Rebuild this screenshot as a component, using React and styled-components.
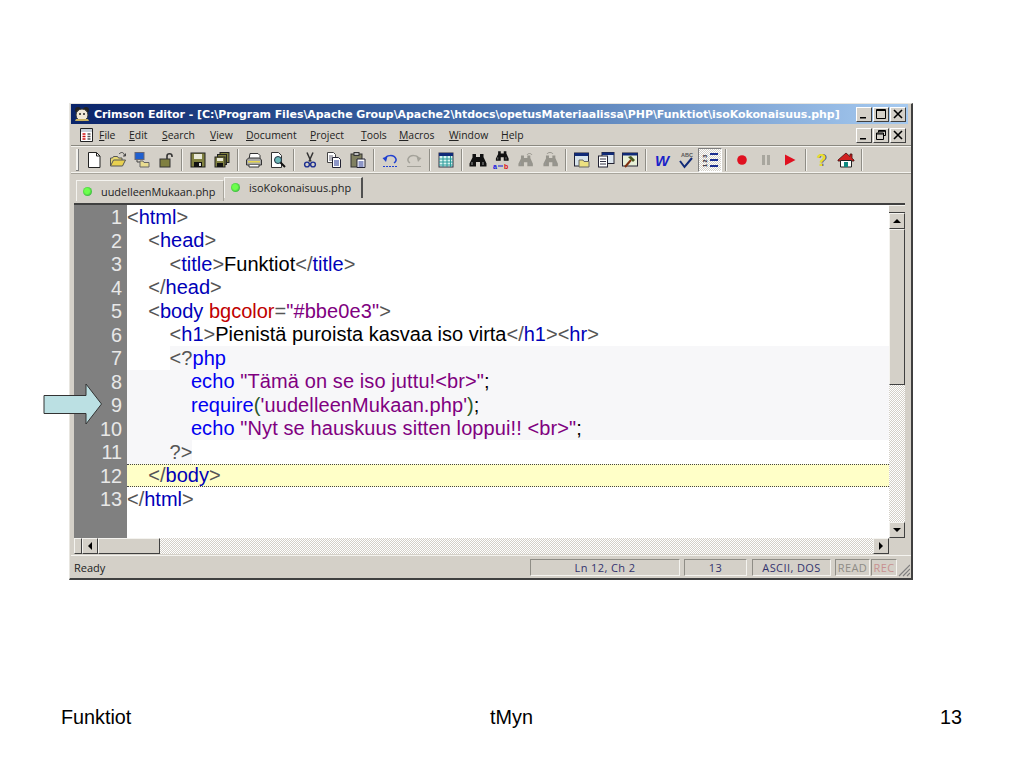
import React from "react";
import styled, { createGlobalStyle } from "styled-components";

const Global = createGlobalStyle`
  html, body { margin: 0; padding: 0; background: #fff; }
  body { font-family: "Liberation Sans", Arial, sans-serif; }
`;

const Slide = styled.div`
  position: relative;
  width: 1024px;
  height: 768px;
  overflow: hidden;
  padding: 103px 0 0 69px;
  box-sizing: border-box;
`;
const Win = styled.div`
  width: 844px;
  height: 477px;
  box-sizing: border-box;
  display: flex;
  flex-direction: column;
  background: #d4d0c8;
  border-right: 2px solid #404040;
  border-bottom: 2px solid #404040;
  border-left: 1px solid #e8e6e0;
  border-top: 1px solid #e8e6e0;
  padding-left: 1px;
`;
const TitleBar = styled.div`
  height: 20px;
  flex: none;
  display: flex;
  align-items: center;
  padding-right: 2px;
  margin-right: 3px;
  background: linear-gradient(90deg, #0a246a 0%, #3f69a8 45%, #a6caf0 100%);
  color: #fff;
  font: bold 11px "DejaVu Sans", sans-serif;
  letter-spacing: -0.07px;
  white-space: nowrap;
`;
const TitleIcon = styled.svg`
  width: 18px;
  height: 16px;
  margin: 0 3px 0 2px;
  flex: none;
`;
const TitleText = styled.span`
  flex: 1;
  overflow: hidden;
`;
const CaptionGroup = styled.div`
  display: flex;
  gap: ${p => p.$gap}px;
  flex: none;
  padding-right: ${p => p.$pad}px;
`;
const CaptionBtn = styled.div`
  width: 16px;
  height: 15px;
  box-sizing: border-box;
  background: #d4d0c8;
  border: 1px solid;
  border-color: #fff #404040 #404040 #fff;
  display: flex;
  align-items: center;
  justify-content: center;
  svg { width: 10px; height: 10px; display: block; }
`;
const MenuBar = styled.div`
  height: 22px;
  flex: none;
  display: flex;
  align-items: center;
  font: 10.4px "Open Sans", sans-serif;
  color: #222;
  padding-left: 8px;
`;
const MenuIcon = styled.svg`
  width: 15px;
  height: 16px;
  flex: none;
  margin-right: 5px;
`;
const MenuItems = styled.div`
  display: flex;
  flex: 1;
`;
const MenuItem = styled.span`
  width: ${p => p.$w}px;
  u { text-decoration: underline; }
`;
const Toolbar = styled.div`
  height: 27px;
  flex: none;
  box-sizing: border-box;
  display: flex;
  align-items: center;
  border-top: 1px solid #f4f3ef;
  border-bottom: 1px solid #f4f3ef;
  box-shadow: 0 -1px 0 #8a8880, 0 1px 0 #a8a59c;
  padding-left: 5px;
`;
const Grip = styled.div`
  width: 2px;
  height: 21px;
  flex: none;
  margin-right: 3px;
  background: #f4f3ef;
  border-right: 1px solid #808080;
  border-bottom: 1px solid #808080;
`;
const ToolBtn = styled.div`
  width: 24px;
  height: 24px;
  flex: none;
  box-sizing: border-box;
  display: flex;
  align-items: center;
  justify-content: center;
  ${p => p.$active && `
    background: repeating-conic-gradient(#d4d0c8 0 25%, #fff 0 50%) 0 0 / 2px 2px;
    border: 1px solid;
    border-color: #808080 #fff #fff #808080;
  `}
  svg { width: 18px; height: 18px; display: block; }
`;
const ToolSep = styled.div`
  width: 8px;
  height: 22px;
  flex: none;
  &::after {
    content: "";
    display: block;
    width: 1px;
    height: 100%;
    margin-left: 3px;
    background: #8f8d86;
    box-shadow: 1px 0 0 #f4f3ef;
  }
`;
const TabStrip = styled.div`
  height: 29px;
  flex: none;
  display: flex;
  align-items: flex-start;
  padding: 3px 0 0 5px;
  box-sizing: border-box;
  margin-top: 1px;
  font: 10.9px "Open Sans", sans-serif;
  color: #222;
`;
const Tab = styled.div`
  display: flex;
  align-items: center;
  box-sizing: border-box;
  height: 21px;
  width: ${p => p.$w}px;
  padding-left: 6px;
  gap: 9px;
  margin-top: ${p => (p.$selected ? 0 : 3)}px;
  border-top: 1px solid #f4f3ef;
  border-left: 1px solid #f4f3ef;
  ${p => p.$selected
    ? `border-right: 2px solid #505050; padding-bottom: 2px;`
    : `border-right: 1px solid #a8a59c;`}
`;
const Dot = styled.span`
  width: 9px;
  height: 9px;
  border-radius: 50%;
  flex: none;
  background: radial-gradient(circle at 45% 45%, #6dff4d 0 35%, #2ea83a 80%);
`;
const EditorFrame = styled.div`
  flex: none;
  height: 349px;
  margin: 0 6px 0 3px;
  border-top: 2px solid #404040;
  display: grid;
  grid-template-columns: 1fr 16px;
  grid-template-rows: 1fr 16px;
`;
const CodeArea = styled.div`
  background: #fff;
  display: flex;
  overflow: hidden;
`;
const Gutter = styled.div`
  width: 53px;
  flex: none;
  background: #808080;
  color: #e8e8e8;
  text-align: right;
`;
const GutterNum = styled.div`
  height: 23.5px;
  line-height: 24.5px;
  padding-right: 5px;
  font-size: 19.8px;
`;
const Lines = styled.div`
  flex: 1;
  min-width: 0;
`;
const Line = styled.div`
  height: 23.5px;
  box-sizing: border-box;
  display: flex;
  align-items: center;
  font-size: 20px;
  white-space: pre;
  background: ${p => (p.$tint ? "#f7f7f9" : "transparent")};
  ${p => p.$current && `
    background: #ffffc8;
    border-top: 1px dotted #444;
    border-bottom: 1px dotted #444;
  `}
`;
const Indent = styled.span`
  flex: none;
  width: ${p => p.$level * 21.3}px;
  align-self: stretch;
  background: ${p => (p.$tint ? "#f7f7f9" : "transparent")};
`;
const Code = styled.span`
  align-self: stretch;
  display: flex;
  align-items: center;
  padding-top: 1px;
  ${p => p.$grow && "flex: 1;"}
  background: ${p => (p.$tint ? "#f7f7f9" : "transparent")};
`;
const colors = { p: "#555", t: "#0000b8", x: "#000", a: "#c00000", s: "#800080", k: "#0000f0", g: "#2a5a2a" };
const Tok = styled.span`
  color: ${p => colors[p.$k]};
  letter-spacing: ${p => (p.$k === "s" || p.$k === "k" ? "0.1px" : "0")};
`;
const VScroll = styled.div`
  display: flex;
  flex-direction: column;
  background: repeating-conic-gradient(#d4d0c8 0 25%, #fff 0 50%) 0 0 / 2px 2px;
`;
const HScroll = styled.div`
  display: flex;
  background: repeating-conic-gradient(#d4d0c8 0 25%, #fff 0 50%) 0 0 / 2px 2px;
`;
const ScrollCap = styled.div`
  height: 8px;
  flex: none;
  background: #d4d0c8;
  border-top: 1px solid #f4f3ef;
  border-bottom: 1px solid #404040;
  box-sizing: border-box;
`;
const ScrollBtn = styled.div`
  flex: none;
  width: ${p => p.$w || 16}px;
  height: 16px;
  box-sizing: border-box;
  background: #d4d0c8;
  border: 1px solid;
  border-color: #f4f3ef #404040 #404040 #f4f3ef;
  display: flex;
  align-items: center;
  justify-content: center;
`;
const Arrow = styled.span`
  width: 0;
  height: 0;
  border-style: solid;
  border-color: transparent;
  ${p => p.$dir === "up" && "border-width: 0 4px 4px; border-bottom-color: #000;"}
  ${p => p.$dir === "down" && "border-width: 4px 4px 0; border-top-color: #000;"}
  ${p => p.$dir === "left" && "border-width: 4px 4px 4px 0; border-right-color: #000;"}
  ${p => p.$dir === "right" && "border-width: 4px 0 4px 4px; border-left-color: #000;"}
`;
const VThumb = styled.div`
  height: 156px;
  flex: none;
  box-sizing: border-box;
  background: #d4d0c8;
  border: 1px solid;
  border-color: #f4f3ef #404040 #404040 #f4f3ef;
`;
const HThumb = styled.div`
  width: 62px;
  height: 16px;
  flex: none;
  box-sizing: border-box;
  background: #d4d0c8;
  border: 1px solid;
  border-color: #f4f3ef #404040 #404040 #f4f3ef;
`;
const Track = styled.div`
  flex: 1;
`;
const Corner = styled.div`
  background: #d4d0c8;
`;
const StatusBar = styled.div`
  flex: 1;
  display: flex;
  align-items: center;
  border-top: 1px solid #f4f3ef;
  font: 11px "Open Sans", sans-serif;
  color: #222;
  padding-left: 3px;
  margin-top: 1px;
`;
const StatusText = styled.span`
  flex: 1;
`;
const StatusCell = styled.div`
  width: ${p => p.$w}px;
  margin-right: ${p => p.$gap}px;
  height: 17px;
  box-sizing: border-box;
  flex: none;
  display: flex;
  align-items: center;
  justify-content: center;
  overflow: hidden;
  letter-spacing: 0.4px;
  border: 1px solid;
  border-color: #8f8d86 #f4f3ef #f4f3ef #8f8d86;
  color: ${p => p.$color || "#33336e"};
`;
const Grip2 = styled.svg`
  width: 12px;
  height: 14px;
  flex: none;
  align-self: flex-end;
  margin: 0 1px 1px 0;
`;
const Callout = styled.svg`
  position: absolute;
  left: 43px;
  top: 383px;
  width: 60px;
  height: 43px;
`;
const Footer = styled.div`
  display: grid;
  grid-template-columns: 1fr 1fr 1fr;
  margin: 126px 62px 0 -8px;
  font-size: 19.8px;
  line-height: 22px;
  color: #000;
`;
const FootCell = styled.span`
  text-align: ${p => p.$align};
`;

const I = ({ children }) => <svg viewBox="0 0 18 18">{children}</svg>;
const D = "#222";
const Binoc = ({ c = "#111" }) => (
  <g>
    <path fill={c} d="M3.500 3h3.500v3h4V3h3.500v3l3 6.500V15.500H11V11H7v4.500H.5V12.500l3-6z" />
    <path d="M3 11v3M14 11v3" stroke="#9a9a9a" strokeWidth="1" />
  </g>
);
const icons = {
  new: <I><path d="M3.500 1.500h8l3.500 3.500v11.500H3.500z" fill="#fff" stroke={D} /><path d="M11.500 1.500V5H15" fill="none" stroke={D} /></I>,
  open: <I><path d="M1.500 15V7h2l1-1.500h4L9.500 7H13v2" fill="#e8d870" stroke="#555" /><path d="M1.500 15l3-6h12l-3 6z" fill="#e8d050" stroke="#555" /><path d="M10 3c2-2 4-2 5 0l1 2M16.500 2.500V5H14" fill="none" stroke="#444" /></I>,
  net: <I><rect x="2" y="1.500" width="9" height="7" fill="#2060d0" stroke="#667" /><path d="M4 9v2h5" fill="none" stroke="#444" /><path d="M7 16V10h3l1 1.500h5V16z" fill="#e8dc90" stroke="#666" /></I>,
  lock: <I><rect x="3" y="8" width="10" height="8" fill="#808040" stroke="#333" /><path d="M10 8V5c0-3 5-3 5 0v1" fill="none" stroke="#333" strokeWidth="1.600" /></I>,
  save: <I><rect x="2" y="2" width="14" height="14" fill="#808040" stroke="#222" /><rect x="5" y="3" width="8" height="5" fill="#e8e8d8" /><rect x="5" y="11" width="8" height="5" fill="#111" /><rect x="10" y="12" width="2" height="3" fill="#ddd" /></I>,
  saveall: <I><rect x="7" y="1.500" width="9" height="10" fill="#808040" stroke="#222" /><rect x="4.500" y="3.500" width="9" height="10" fill="#808040" stroke="#222" /><rect x="2" y="6" width="10" height="10" fill="#808040" stroke="#222" /><rect x="4" y="7" width="6" height="3" fill="#e8e8d8" /><rect x="4" y="12" width="6" height="4" fill="#111" /></I>,
  print: <I><path d="M5 2.500h8l2 2v4H4z" fill="#fff" stroke="#333" /><path d="M1.500 9l2-2h11l2 2v5h-15z" fill="#a8a8a8" stroke="#333" /><rect x="3" y="10" width="12" height="1.500" fill="#e8d850" /><path d="M4 14v2h10v-2" fill="#fff" stroke="#333" /></I>,
  preview: <I><path d="M2.500 1.500h7l3 3v12h-10z" fill="#fff" stroke="#333" /><circle cx="9" cy="9" r="3.500" fill="#6cb8b8" stroke="#234" /><path d="M11.500 11.500l4.500 4.500" stroke="#111" strokeWidth="2" /></I>,
  cut: <I><path d="M6 1.500l4 9M12 1.500l-4 9" stroke="#333" strokeWidth="1.500" /><circle cx="6" cy="13.500" r="2.400" fill="none" stroke="#1c2e90" strokeWidth="1.400" /><circle cx="12" cy="13.500" r="2.400" fill="none" stroke="#1c2e90" strokeWidth="1.400" /></I>,
  copy: <I><path d="M2.500 1.500h6l2 2v8h-8z" fill="#fff" stroke="#444" /><path d="M4 5h4M4 7h4M4 9h4" stroke="#667" /><path d="M7.500 6.500h6l2 2v8h-8z" fill="#fff" stroke="#223" /><path d="M9 10h5M9 12h5M9 14h5" stroke="#1c2e90" /></I>,
  paste: <I><rect x="2" y="3" width="11" height="13" fill="#808060" stroke="#333" /><rect x="5" y="1.500" width="5" height="3" fill="#bbb" stroke="#333" /><path d="M8 8h8v8.500H8z" fill="#fff" stroke="#223" /><path d="M9.500 11h5M9.500 13h5M9.500 15h5" stroke="#1c2e90" /></I>,
  undo: <I><path d="M4 8c1-4 9-5 11 0 .6 2-.5 3-2 4" fill="none" stroke="#2040d0" strokeWidth="1.500" /><path d="M1.500 7l5-1.500L5 11z" fill="#2040d0" /><path d="M2 15.500h14" stroke="#2040d0" strokeDasharray="2 1" /></I>,
  redo: <I><path d="M14 8c-1-4-9-5-11 0-.6 2 .5 3 2 4" fill="none" stroke="#a4a29a" strokeWidth="1.500" /><path d="M16.500 7l-5-1.500L13 11z" fill="#a4a29a" /><path d="M2 15.500h14" stroke="#a4a29a" /></I>,
  table: <I><rect x="2" y="2" width="14" height="14" fill="#d8f4f0" stroke="#334" /><rect x="2" y="2" width="14" height="3" fill="#102a78" /><path d="M2 8h14M2 11h14M2 14h14M6 5v11M10 5v11M13.500 5v11" stroke="#2a9a9a" /></I>,
  find: <I><Binoc /></I>,
  replace: <I><g transform="translate(2.500 -2) scale(.75)"><Binoc /></g><text x="0" y="17.500" fontSize="7" fontWeight="700" fill="#1010e0" fontFamily="Liberation Sans">a</text><path d="M5 15h5" stroke="#1010e0" /><text x="11" y="17.500" fontSize="7" fontWeight="700" fill="#e01010" fontFamily="Liberation Sans">b</text></I>,
  findg: <I><g transform="translate(1 2) scale(.85)"><Binoc c="#96948c" /></g><path d="M10 4c1-2 4-2 5 0" fill="none" stroke="#96948c" /></I>,
  replg: <I><g transform="translate(2 2) scale(.85)"><Binoc c="#96948c" /></g><path d="M6 3c1-2 5-2 6 0" fill="none" stroke="#96948c" /></I>,
  winfolder: <I><rect x="1.500" y="2" width="14" height="13" fill="#d8e4ec" stroke="#223" /><rect x="1.500" y="2" width="14" height="3" fill="#102a78" /><path d="M6 16V9h4l1 1.500h5V16z" fill="#ece080" stroke="#666" /></I>,
  winstack: <I><rect x="5" y="1.500" width="12" height="11" fill="#dde6ee" stroke="#223" /><rect x="5" y="1.500" width="12" height="2.500" fill="#102a78" /><rect x="1.500" y="5" width="9" height="11" fill="#fff" stroke="#223" /><path d="M3 8h6M3 10.500h6M3 13h6" stroke="#334" /></I>,
  winhammer: <I><rect x="1.500" y="2" width="15" height="13" fill="#e8f0d8" stroke="#223" /><rect x="1.500" y="2" width="15" height="2.500" fill="#102a78" /><path d="M4 16l6-7" stroke="#803010" strokeWidth="2" /><path d="M7 6l3-1 4 4-2 2z" fill="#4a5a20" /></I>,
  w: <I><text x="9" y="14.500" textAnchor="middle" fontSize="15" fontStyle="italic" fontWeight="700" fill="#1a22c8" fontFamily="Liberation Sans">W</text></I>,
  spell: <I><text x="4" y="6" fontSize="5.500" fontWeight="700" fill="#555" fontFamily="Liberation Sans">ABC</text><path d="M3 10l4.500 6L15 7" fill="none" stroke="#102a78" strokeWidth="2" /></I>,
  lines: <I><text x="0" y="0" transform="translate(6 16) rotate(-90)" fontSize="5.500" fontWeight="700" fill="#223" fontFamily="Liberation Sans">1 2 3</text><path d="M9 3h8M9 9h8M9 15h8" stroke="#1c2e90" strokeWidth="1.800" /></I>,
  rec: <I><circle cx="9" cy="9" r="4.800" fill="#e01020" /></I>,
  pause: <I><rect x="5" y="4" width="3" height="10" fill="#a8a69e" /><rect x="10" y="4" width="3" height="10" fill="#a8a69e" /></I>,
  play: <I><path d="M4 3.500L14.500 9 4 14.500z" fill="#e01020" /></I>,
  help: <I><text x="9.500" y="15" textAnchor="middle" fontSize="16" fontWeight="700" fill="#444" fontFamily="Liberation Sans">?</text><text x="8.500" y="14.500" textAnchor="middle" fontSize="16" fontWeight="700" fill="#e8e030" fontFamily="Liberation Sans">?</text></I>,
  home: <I><path d="M1 9l8-7 4 3.500V3h2v4.200L17 9v1H1z" fill="#d02020" stroke="#401010" strokeWidth=".8" /><path d="M3.500 9.500h11V16h-11z" fill="#fff" stroke="#222" /><rect x="7" y="11" width="4" height="5" fill="#108a80" /></I>,
};

const toolGroups = [
  [{ i: "new" }, { i: "open" }, { i: "net" }, { i: "lock" }],
  [{ i: "save" }, { i: "saveall" }],
  [{ i: "print" }, { i: "preview" }],
  [{ i: "cut" }, { i: "copy" }, { i: "paste" }],
  [{ i: "undo" }, { i: "redo" }],
  [{ i: "table" }],
  [{ i: "find" }, { i: "replace" }, { i: "findg" }, { i: "replg" }],
  [{ i: "winfolder" }, { i: "winstack" }, { i: "winhammer" }],
  [{ i: "w" }, { i: "spell" }, { i: "lines", active: true }],
  [{ i: "rec" }, { i: "pause" }, { i: "play" }],
  [{ i: "help" }, { i: "home" }],
];

const menus = [
  ["F", "ile", 30], ["E", "dit", 33], ["S", "earch", 48], ["V", "iew", 36], ["D", "ocument", 64],
  ["P", "roject", 51], ["T", "ools", 38], ["M", "acros", 50], ["W", "indow", 52], ["H", "elp", 30],
];

const code = [
  { l: 0, t: [["p", "<"], ["t", "html"], ["p", ">"]] },
  { l: 1, t: [["p", "<"], ["t", "head"], ["p", ">"]] },
  { l: 2, t: [["p", "<"], ["t", "title"], ["p", ">"], ["x", "Funktiot"], ["p", "</"], ["t", "title"], ["p", ">"]] },
  { l: 1, t: [["p", "</"], ["t", "head"], ["p", ">"]] },
  { l: 1, t: [["p", "<"], ["t", "body "], ["a", "bgcolor"], ["p", "="], ["s", "\"#bbe0e3\""], ["p", ">"]] },
  { l: 2, t: [["p", "<"], ["t", "h1"], ["p", ">"], ["x", "Pienistä puroista kasvaa iso virta"], ["p", "</"], ["t", "h1"], ["p", "><"], ["t", "hr"], ["p", ">"]] },
  { l: 2, grow: true, t: [["p", "<?"], ["k", "php"]] },
  { l: 3, tint: true, t: [["k", "echo "], ["s", "\"Tämä on se iso juttu!<br>\""], ["x", ";"]] },
  { l: 3, tint: true, t: [["k", "require"], ["g", "("], ["s", "'uudelleenMukaan.php'"], ["g", ")"], ["x", ";"]] },
  { l: 3, tint: true, t: [["k", "echo "], ["s", "\"Nyt se hauskuus sitten loppui!! <br>\""], ["x", ";"]] },
  { l: 2, end: true, t: [["p", "?>"]] },
  { l: 1, current: true, t: [["p", "</"], ["t", "body"], ["p", ">"]] },
  { l: 0, t: [["p", "</"], ["t", "html"], ["p", ">"]] },
];

const cells = [
  { w: 150, gap: 4, text: "Ln 12, Ch 2" },
  { w: 63, gap: 5, text: "13" },
  { w: 79, gap: 4, text: "ASCII, DOS" },
  { w: 35, gap: 1, text: "READ", color: "#8e8c86" },
  { w: 26, gap: 1, text: "REC", color: "#c89090" },
];

const Min = () => <svg viewBox="0 0 10 10"><path d="M1 8h6v1.500H1z" fill="#000" /></svg>;
const Max = () => <svg viewBox="0 0 10 10"><path d="M.5.5h9v9h-9zM.5 1.500h9" fill="none" stroke="#000" /></svg>;
const Restore = () => <svg viewBox="0 0 10 10"><path d="M2.500 2.500V.5h7v5h-2M.5 3h7v6.500h-7zM.5 4h7M2.500 1.300h7" fill="none" stroke="#000" /></svg>;
const Close = () => <svg viewBox="0 0 10 10"><path d="M1 1l8 8M9 1l-8 8" stroke="#000" strokeWidth="1.600" /></svg>;

export default function App() {
  return (
    <Slide>
      <Global />
      <Win>
        <TitleBar>
          <TitleIcon viewBox="0 0 18 16">
            <circle cx="5" cy="4" r="3" fill="#222" />
            <circle cx="13" cy="4" r="3" fill="#222" />
            <circle cx="9" cy="9" r="6" fill="#f0e8d8" stroke="#333" />
            <circle cx="7" cy="8" r="1" fill="#222" />
            <circle cx="11" cy="8" r="1" fill="#222" />
            <path d="M3 13h12l1 2H2z" fill="#c8b060" />
          </TitleIcon>
          <TitleText>Crimson Editor - [C:\Program Files\Apache Group\Apache2\htdocs\opetusMateriaalissa\PHP\Funktiot\isoKokonaisuus.php]</TitleText>
          <CaptionGroup $gap={1} $pad={0}>
            <CaptionBtn><Min /></CaptionBtn>
            <CaptionBtn><Max /></CaptionBtn>
            <CaptionBtn><Close /></CaptionBtn>
          </CaptionGroup>
        </TitleBar>
        <MenuBar>
          <MenuIcon viewBox="0 0 15 16">
            <path d="M1.500 1.500h12v13h-12z" fill="#fff" stroke="#222" />
            <path d="M2 2h11v3H2z" fill="#c8d0d8" />
            <path d="M3.500 7h3M3.500 9.500h3M3.500 12h3" stroke="#d01010" strokeWidth="1.400" />
            <path d="M8.500 7h3M8.500 9.500h3M8.500 12h3" stroke="#555" strokeWidth="1.400" />
          </MenuIcon>
          <MenuItems>
            {menus.map(([u, rest, w]) => (
              <MenuItem key={u} $w={w}><u>{u}</u>{rest}</MenuItem>
            ))}
          </MenuItems>
          <CaptionGroup $gap={1} $pad={5}>
            <CaptionBtn><Min /></CaptionBtn>
            <CaptionBtn><Restore /></CaptionBtn>
            <CaptionBtn><Close /></CaptionBtn>
          </CaptionGroup>
        </MenuBar>
        <Toolbar>
          <Grip />
          {toolGroups.map((group, gi) => (
            <React.Fragment key={gi}>
              {group.map(b => (
                <ToolBtn key={b.i} $active={b.active}>{icons[b.i]}</ToolBtn>
              ))}
              <ToolSep />
            </React.Fragment>
          ))}
        </Toolbar>
        <TabStrip>
          <Tab $w={148}><Dot />uudelleenMukaan.php</Tab>
          <Tab $w={139} $selected><Dot />isoKokonaisuus.php</Tab>
        </TabStrip>
        <EditorFrame>
          <CodeArea>
            <Gutter>
              {code.map((_, i) => <GutterNum key={i}>{i + 1}</GutterNum>)}
            </Gutter>
            <Lines>
              {code.map((ln, i) => (
                <Line key={i} $tint={ln.tint} $current={ln.current}>
                  <Indent $level={ln.l} $tint={ln.end} />
                  <Code $grow={ln.grow} $tint={ln.grow || ln.end}>
                    {ln.t.map(([k, s], j) => <Tok key={j} $k={k}>{s}</Tok>)}
                  </Code>
                </Line>
              ))}
            </Lines>
          </CodeArea>
          <VScroll>
            <ScrollCap />
            <ScrollBtn><Arrow $dir="up" /></ScrollBtn>
            <VThumb />
            <Track />
            <ScrollBtn><Arrow $dir="down" /></ScrollBtn>
          </VScroll>
          <HScroll>
            <ScrollBtn $w={8} />
            <ScrollBtn><Arrow $dir="left" /></ScrollBtn>
            <HThumb />
            <Track />
            <ScrollBtn><Arrow $dir="right" /></ScrollBtn>
          </HScroll>
          <Corner />
        </EditorFrame>
        <StatusBar>
          <StatusText>Ready</StatusText>
          {cells.map(c => (
            <StatusCell key={c.text} $w={c.w} $gap={c.gap} $color={c.color}>{c.text}</StatusCell>
          ))}
          <Grip2 viewBox="0 0 12 14">
            <path d="M12 2L1 13M12 6l-7 7M12 10l-3 3" stroke="#808080" strokeWidth="1.200" />
          </Grip2>
        </StatusBar>
      </Win>
      <Callout viewBox="0 0 60 43">
        <path d="M1 12.500h42V1L58.500 21 43 41V30.500H1z" fill="#bbe0e3" stroke="#333" strokeWidth="1" />
      </Callout>
      <Footer>
        <FootCell $align="left">Funktiot</FootCell>
        <FootCell $align="center">tMyn</FootCell>
        <FootCell $align="right">13</FootCell>
      </Footer>
    </Slide>
  );
}
